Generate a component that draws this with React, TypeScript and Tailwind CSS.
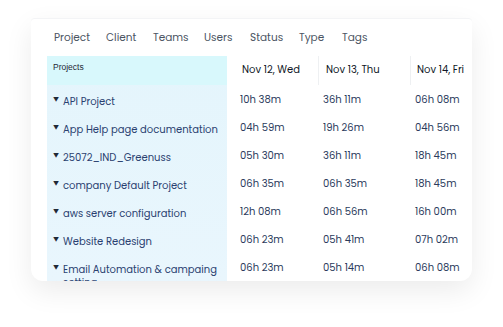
import React from 'react';

// tab widths taken so each label starts where the screenshot has it
const tabs = [
  { label: 'Project', cls: 'w-[52px]' },
  { label: 'Client', cls: 'w-[47px]' },
  { label: 'Teams', cls: 'w-[51px]' },
  { label: 'Users', cls: 'w-[46px]' },
  { label: 'Status', cls: 'w-[49px]' },
  { label: 'Type', cls: 'w-[43px]' },
  { label: 'Tags', cls: 'w-[40px]' },
];

const days = ['Nov 12, Wed', 'Nov 13, Thu', 'Nov 14, Fri'];

const rows = [
  { name: 'API Project', times: ['10h 38m', '36h 11m', '06h 08m'] },
  { name: 'App Help page documentation', times: ['04h 59m', '19h 26m', '04h 56m'] },
  { name: '25072_IND_Greenuss', times: ['05h 30m', '36h 11m', '18h 45m'] },
  { name: 'company Default Project', times: ['06h 35m', '06h 35m', '18h 45m'] },
  { name: 'aws server configuration', times: ['12h 08m', '06h 56m', '16h 00m'] },
  { name: 'Website Redesign', times: ['06h 23m', '05h 41m', '07h 02m'] },
  { name: 'Email Automation & campaing setting', times: ['06h 23m', '05h 14m', '06h 08m'] },
];

const cols = [
  { w: 'w-[91px]', head: 'pl-[15px]', cell: 'pl-[13px]' },
  { w: 'w-[92px]', head: 'pl-[7px] border-l border-[#eef0f2]', cell: 'pl-[5px]' },
  { w: 'w-[80px]', head: 'pl-[6px] border-l border-[#eef0f2]', cell: 'pl-[5px]' },
];

const App = () => {
  return (
    <div className="w-[503px] h-[327px] bg-white pt-[18px] pl-[31px]" style={{ fontFamily: '"Poppins", "Inter", "Noto Sans", sans-serif' }}>
      <div className="w-[441px] h-[263px] overflow-hidden rounded-b-[12px] rounded-t-[4px] bg-white border-t border-gray-100 shadow-[0_10px_28px_rgba(0,0,0,0.08)]">
        {/* Filter tabs */}
        <div className="flex pl-[23px] pt-[11px] h-[37px] text-[10.5px] leading-[16px] text-[#4b5563] whitespace-nowrap">
          {tabs.map((t) => (
            <span key={t.label} className={`${t.cls} shrink-0`}>{t.label}</span>
          ))}
        </div>

        {/* Table */}
        <div className="flex pl-[16px]">
          {/* Project names */}
          <div className="w-[180px] shrink-0 bg-gradient-to-b from-[#e4f5fc] to-[#e9f6fd]">
            <div className="h-[29px] bg-[#d8f8fc] pl-[6px] pt-[5px] text-[8.5px] text-[#1f2937]" style={{ fontFamily: '"Liberation Sans Narrow", "Liberation Sans", sans-serif' }}>
              Projects
            </div>
            {rows.map((r) => (
              <div key={r.name} className="flex h-[28px] pl-[6px] pt-[10px] text-[10px] leading-[13px] text-[#2a4170]">
                <span className="w-[10px] shrink-0 text-[6px] leading-[10px] text-[#1f2937]">▼</span>
                <span>{r.name}</span>
              </div>
            ))}
          </div>

          {/* Day columns */}
          {days.map((d, i) => (
            <div key={d} className={`${cols[i].w} shrink-0 whitespace-nowrap`}>
              <div className={`h-[29px] ${cols[i].head} pt-[7px] text-[10px] leading-[14px] text-[#111827]`}>{d}</div>
              {rows.map((r) => (
                <div key={r.name} className={`h-[28px] ${cols[i].cell} pt-[8px] text-[10px] leading-[14px] text-[#2b3b5c]`}>
                  {r.times[i]}
                </div>
              ))}
            </div>
          ))}
        </div>
      </div>
    </div>
  );
};

export default App;
